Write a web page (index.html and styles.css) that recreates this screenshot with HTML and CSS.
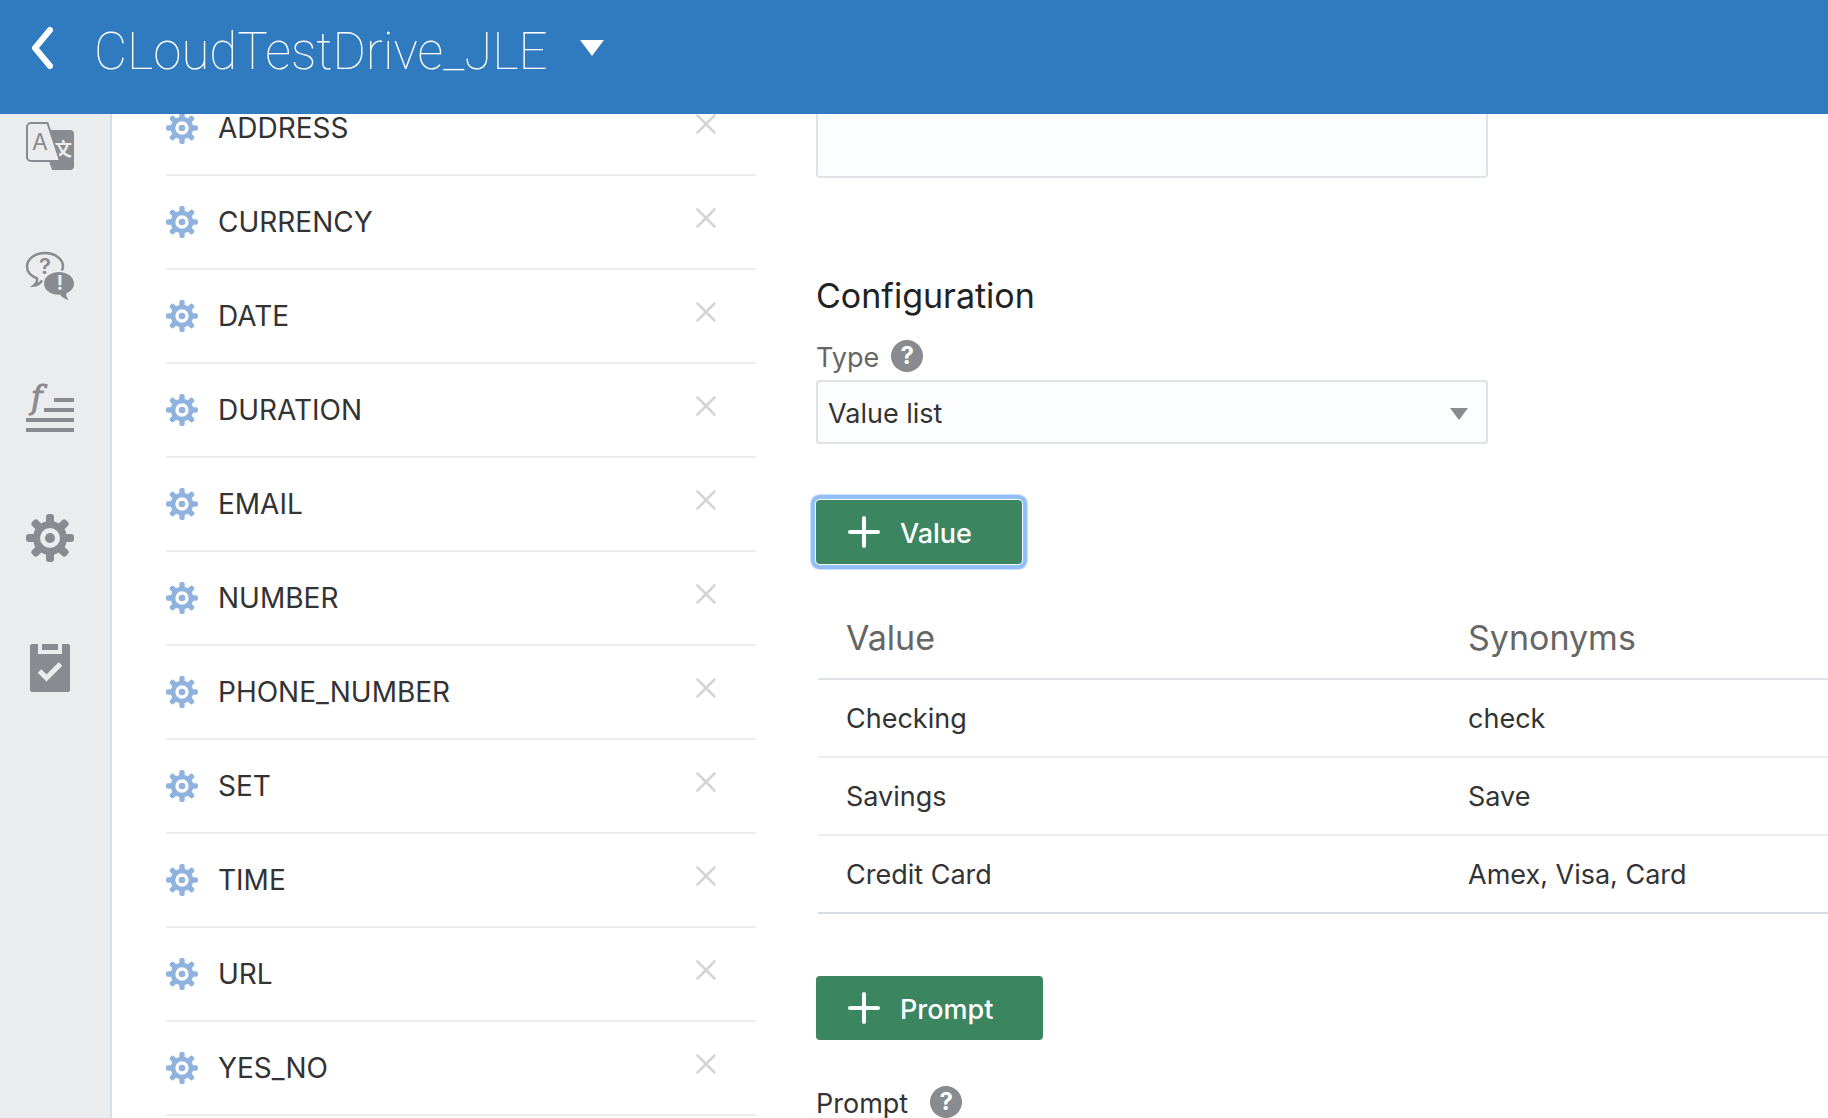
FILE: index.html
```html
<!DOCTYPE html>
<html lang="en">
<head>
<meta charset="utf-8">
<meta name="viewport" content="width=device-width, initial-scale=1">
<title>CLoudTestDrive_JLE</title>
<link rel="stylesheet" href="styles.css">
</head>
<body>
<svg class="sprite" aria-hidden="true">
  <defs>
    <g id="tooth-pair"><rect x="20" y="0" width="8" height="12" rx="3"/><rect x="20" y="36" width="8" height="12" rx="3"/></g>
    <symbol id="gear" viewBox="0 0 48 48">
      <g fill="currentColor">
        <use href="#tooth-pair"/>
        <use href="#tooth-pair" transform="rotate(45 24 24)"/>
        <use href="#tooth-pair" transform="rotate(90 24 24)"/>
        <use href="#tooth-pair" transform="rotate(135 24 24)"/>
        <circle cx="24" cy="24" r="5"/>
      </g>
      <circle cx="24" cy="24" r="13.5" fill="none" stroke="currentColor" stroke-width="7"/>
    </symbol>
    <symbol id="cross" viewBox="0 0 20 20"><path d="M1.5 1.5l17 17M18.5 1.5l-17 17" fill="none" stroke="currentColor" stroke-width="2.6" stroke-linecap="round"/></symbol>
    <symbol id="plus" viewBox="0 0 32 32"><path d="M16 2v28M2 16h28" fill="none" stroke="currentColor" stroke-width="4" stroke-linecap="round"/></symbol>
  </defs>
</svg>

<header class="topbar">
  <button class="back" type="button" aria-label="Back">
    <svg width="24" height="44" viewBox="0 0 24 44"><path d="M20 4L5 22l15 18" fill="none" stroke="currentColor" stroke-width="6" stroke-linecap="round" stroke-linejoin="round"/></svg>
  </button>
  <h1 class="bot-name">CLoudTestDrive_JLE</h1>
  <button class="bot-menu" type="button" aria-label="Switch bot">
    <svg width="24" height="16" viewBox="0 0 24 16"><path d="M0 0h24L12 16z" fill="currentColor"/></svg>
  </button>
</header>

<div class="shell">
  <nav class="rail" aria-label="Sections">
    <a href="#translate" aria-label="Translate">
      <svg width="48" height="50" viewBox="0 0 48 50">
        <path d="M22 8h22a4 4 0 0 1 4 4v32a4 4 0 0 1-4 4H26l-3-9z" fill="currentColor"/>
        <text class="glyph-cjk" x="28" y="34">文</text>
        <path class="card" d="M5 1h16.500L34 39H5a4 4 0 0 1-4-4V5a4 4 0 0 1 4-4z"/>
        <text class="glyph-a" x="14" y="28">A</text>
      </svg>
    </a>
    <a href="#qna" aria-label="Questions and answers">
      <svg width="48" height="50" viewBox="0 0 48 50">
        <path d="M35.800 18.500C36.600 17 37 15.800 37 14.500 37 7 29 1 19 1S1 7 1 14.500c0 5.500 4 9.500 10 12 .5 2.500-.5 5-3 7 4-.5 6.500-2.500 8-5" fill="none" stroke="currentColor" stroke-width="2.500"/>
        <path d="M33 20c8.300 0 15 5 15 11.500 0 4.500-3.200 8.300-8 10 .3 2.500 1 4.500 3 6.500-4-.8-7-2.500-9-5.200C24.700 43 18 38 18 31.500S24.700 20 33 20z" fill="currentColor"/>
        <text class="glyph-q" x="19" y="22">?</text>
        <text class="glyph-bang" x="34" y="38">!</text>
      </svg>
    </a>
    <a href="#functions" aria-label="Functions">
      <svg width="48" height="50" viewBox="0 0 48 50">
        <text class="glyph-f" x="5" y="26">f</text>
        <path d="M28 16h20v4H28zM18 26h30v4H18zM0 36h48v4H0zM0 46h48v4H0z" fill="currentColor"/>
      </svg>
    </a>
    <a href="#settings" aria-label="Settings">
      <svg width="48" height="50" viewBox="0 0 48 50"><use href="#gear" y="2" width="48" height="48"/></svg>
    </a>
    <a href="#tasks" aria-label="Tasks">
      <svg width="48" height="50" viewBox="0 0 48 50">
        <path d="M6 2h6v10h24V2h6a2 2 0 0 1 2 2v44a2 2 0 0 1-2 2H6a2 2 0 0 1-2-2V4a2 2 0 0 1 2-2zM16 2h16v6H16z" fill="currentColor"/>
        <path class="tick" d="M13.500 29l7 7L34.500 22"/>
      </svg>
    </a>
  </nav>

  <aside class="entities">
    <ul>
      <li><svg class="gear"><use href="#gear"/></svg><span>ADDRESS</span><button type="button" aria-label="Delete ADDRESS"><svg><use href="#cross"/></svg></button></li>
      <li><svg class="gear"><use href="#gear"/></svg><span>CURRENCY</span><button type="button" aria-label="Delete CURRENCY"><svg><use href="#cross"/></svg></button></li>
      <li><svg class="gear"><use href="#gear"/></svg><span>DATE</span><button type="button" aria-label="Delete DATE"><svg><use href="#cross"/></svg></button></li>
      <li><svg class="gear"><use href="#gear"/></svg><span>DURATION</span><button type="button" aria-label="Delete DURATION"><svg><use href="#cross"/></svg></button></li>
      <li><svg class="gear"><use href="#gear"/></svg><span>EMAIL</span><button type="button" aria-label="Delete EMAIL"><svg><use href="#cross"/></svg></button></li>
      <li><svg class="gear"><use href="#gear"/></svg><span>NUMBER</span><button type="button" aria-label="Delete NUMBER"><svg><use href="#cross"/></svg></button></li>
      <li><svg class="gear"><use href="#gear"/></svg><span>PHONE_NUMBER</span><button type="button" aria-label="Delete PHONE_NUMBER"><svg><use href="#cross"/></svg></button></li>
      <li><svg class="gear"><use href="#gear"/></svg><span>SET</span><button type="button" aria-label="Delete SET"><svg><use href="#cross"/></svg></button></li>
      <li><svg class="gear"><use href="#gear"/></svg><span>TIME</span><button type="button" aria-label="Delete TIME"><svg><use href="#cross"/></svg></button></li>
      <li><svg class="gear"><use href="#gear"/></svg><span>URL</span><button type="button" aria-label="Delete URL"><svg><use href="#cross"/></svg></button></li>
      <li><svg class="gear"><use href="#gear"/></svg><span>YES_NO</span><button type="button" aria-label="Delete YES_NO"><svg><use href="#cross"/></svg></button></li>
    </ul>
  </aside>

  <main class="detail">
    <textarea class="description" aria-label="Description"></textarea>

    <h2>Configuration</h2>
    <div class="label-row">
      <label class="muted" for="type">Type</label>
      <button class="help" type="button" aria-label="Help for Type">?</button>
    </div>
    <div class="select-box">
      <select id="type"><option>Value list</option></select>
      <svg width="18" height="12" viewBox="0 0 18 12"><path d="M0 0h18L9 12z" fill="currentColor"/></svg>
    </div>

    <button class="add focused" type="button"><svg><use href="#plus"/></svg><span>Value</span></button>

    <table>
      <thead><tr><th scope="col">Value</th><th scope="col">Synonyms</th></tr></thead>
      <tbody>
        <tr><td>Checking</td><td>check</td></tr>
        <tr><td>Savings</td><td>Save</td></tr>
        <tr><td>Credit Card</td><td>Amex, Visa, Card</td></tr>
      </tbody>
    </table>

    <button class="add" type="button"><svg><use href="#plus"/></svg><span>Prompt</span></button>
    <div class="label-row prompt-row">
      <span>Prompt</span>
      <button class="help" type="button" aria-label="Help for Prompt">?</button>
    </div>
  </main>
</div>
</body>
</html>
```
FILE: styles.css
```css
:root {
  --blue: #307bbf;
  --green: #3b8561;
  --grey: #888b8f;
  --rail: #ebecee;
  --text: #333;
  --line: #eceded;
  --edge: #dfe3e7;
}

* { box-sizing: border-box; }

body {
  display: flex;
  flex-direction: column;
  height: 100vh;
  margin: 0;
  overflow: hidden;
  background: #fff;
  color: var(--text);
  font: 28px/34px Inter, "Liberation Sans", sans-serif;
}

button { padding: 0; border: 0; background: none; color: inherit; font: inherit; cursor: pointer; }
svg { display: block; flex: none; }
.sprite { position: absolute; width: 0; height: 0; }

.topbar {
  display: flex;
  flex: none;
  align-items: center;
  height: 114px;
  padding: 0 30px 18px;
  background: var(--blue);
  color: #fff;
}
.bot-name { margin: 8px 32px 0 40px; font: 100 51px/64px Roboto, Inter, sans-serif; }

.shell { display: flex; flex: 1; min-height: 0; }

.rail {
  display: flex;
  flex: none;
  flex-direction: column;
  gap: 80px;
  width: 112px;
  padding: 8px 0 0 26px;
  border-right: 2px solid #d6dee4;
  background: var(--rail);
}
.rail a { color: var(--grey); }
.rail svg { overflow: visible; }
.rail text { fill: currentColor; }
.card { fill: var(--rail); stroke: currentColor; stroke-width: 2; }
.tick { fill: none; stroke: var(--rail); stroke-width: 5; }
.rail .glyph-a { font: 400 23px Inter, sans-serif; text-anchor: middle; }
.rail .glyph-cjk { fill: var(--rail); font: 700 18px "Noto Sans CJK SC", sans-serif; }
.rail .glyph-q { font: 600 22px Inter, sans-serif; text-anchor: middle; }
.rail .glyph-bang { fill: var(--rail); font: 700 20px Inter, sans-serif; text-anchor: middle; }
.rail .glyph-f { font: italic 31px "DejaVu Serif", serif; stroke: currentColor; stroke-width: 1; }

/* The list is scrolled part of the way under the top bar. */
.entities { flex: none; width: 644px; padding-left: 54px; overflow: hidden; }
.entities ul { margin: -32px 0 0; padding: 0; list-style: none; }
.entities li {
  display: flex;
  align-items: center;
  gap: 20px;
  height: 94px;
  padding-right: 40px;
  border-bottom: 2px solid var(--line);
}
.entities .gear { width: 32px; height: 32px; color: #8fb2de; }
.entities span { flex: 1; }
.entities button { padding-bottom: 8px; color: #d3d5d7; }
.entities button svg { width: 20px; height: 20px; }

.detail { flex: 1; min-width: 0; padding-left: 60px; overflow: hidden; font-size: 27px; }
.description {
  display: block;
  width: 100%;
  max-width: 672px;
  height: 104px;
  margin-top: -40px;
  border: 2px solid var(--edge);
  border-radius: 4px;
  background: #fcfdfe;
  resize: none;
}
h2 { margin: 96px 0 0; color: #222; font-size: 34px; line-height: 44px; font-weight: 400; }

.label-row { display: flex; align-items: center; gap: 12px; height: 34px; margin-top: 21px; }
.label-row > :first-child { padding-top: 4px; }
.muted { color: #666; }
.help {
  width: 32px;
  height: 32px;
  border-radius: 50%;
  background: var(--grey);
  color: #fff;
  font-size: 24px;
  line-height: 32px;
  font-weight: 700;
}

.select-box { display: grid; align-items: center; max-width: 672px; margin-top: 7px; color: var(--grey); }
.select-box > * { grid-area: 1 / 1; }
.select-box svg { justify-self: end; margin: 4px 20px 0 0; pointer-events: none; }
select {
  width: 100%;
  height: 64px;
  padding: 4px 10px 0;
  border: 2px solid var(--edge);
  border-radius: 4px;
  background: #fcfdfe;
  color: var(--text);
  font: inherit;
  appearance: none;
}

.add {
  display: flex;
  align-items: center;
  gap: 20px;
  height: 64px;
  margin-top: 62px;
  padding: 0 50px 0 32px;
  border-radius: 4px;
  background: var(--green);
  color: #fff;
  font-weight: 500;
}
.add svg { width: 32px; height: 32px; }
.add span { padding-top: 4px; }
.focused { margin-top: 56px; box-shadow: 0 0 0 1px #fff, 0 0 0 5px #93bff8, 0 0 0 6px #c9dffb; }

table { width: calc(100% - 2px); margin: 32px 0 0 2px; border-collapse: separate; border-spacing: 0; table-layout: fixed; }
th, td { padding: 2px 28px 0; text-align: left; font-weight: 400; border-bottom: 2px solid var(--line); }
th:first-child { width: 622px; }
th { height: 84px; color: #666; font-size: 34px; border-color: var(--edge); }
td { height: 78px; }
tbody tr:last-child td { border-color: #d6dde2; }

.prompt-row { gap: 22px; margin-top: 45px; }
```
